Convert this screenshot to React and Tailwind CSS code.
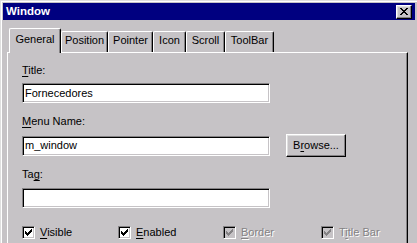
import React from 'react';

const CHECK = [
  [6, 0], [5, 1], [6, 1], [0, 2], [4, 2], [5, 2], [6, 2],
  [0, 3], [1, 3], [3, 3], [4, 3], [5, 3],
  [0, 4], [1, 4], [2, 4], [3, 4], [4, 4],
  [1, 5], [2, 5], [3, 5], [2, 6],
];

const CROSS = [
  [0, 0], [1, 0], [6, 0], [7, 0],
  [1, 1], [2, 1], [5, 1], [6, 1],
  [2, 2], [3, 2], [4, 2], [5, 2],
  [3, 3], [4, 3],
  [2, 4], [3, 4], [4, 4], [5, 4],
  [1, 5], [2, 5], [5, 5], [6, 5],
  [0, 6], [1, 6], [6, 6], [7, 6],
];

function Pixels({ cells, w, h, color }) {
  return (
    <svg width={w} height={h} viewBox={`0 0 ${w} ${h}`} shapeRendering="crispEdges">
      {cells.map(([x, y]) => (
        <rect key={`${x}-${y}`} x={x} y={y} width="1" height="1" fill={color} />
      ))}
    </svg>
  );
}

function Field({ value, className = 'w-[248px]' }) {
  return (
    <div className={`${className} h-[20px] bg-white border border-t-[#848284] border-l-[#848284] border-b-white border-r-white shadow-[inset_1px_1px_#000,inset_-1px_-1px_#c6c3c6] flex items-center pl-[2px] leading-[13px]`}>
      {value}
    </div>
  );
}

function Check({ label, accel, rest, disabled }) {
  return (
    <div className="flex items-center gap-[5px]">
      <div className={`w-[13px] h-[13px] border border-t-[#848284] border-l-[#848284] border-b-white border-r-white shadow-[inset_1px_1px_#000,inset_-1px_-1px_#c6c3c6] flex items-center justify-center ${disabled ? 'bg-[#c6c3c6]' : 'bg-white'}`}>
        <Pixels cells={CHECK} w={7} h={7} color={disabled ? '#848284' : '#000'} />
      </div>
      <span className={`leading-[13px] ${disabled ? 'text-[#848284] [text-shadow:1px_1px_0_#fff]' : ''}`}>
        {label}<span className="underline underline-offset-[2px]">{accel}</span>{rest}
      </span>
    </div>
  );
}

const tabs = [
  { name: 'Position', w: 'w-[47px]' },
  { name: 'Pointer', w: 'w-[45px]' },
  { name: 'Icon', w: 'w-[33px]' },
  { name: 'Scroll', w: 'w-[39px]' },
  { name: 'ToolBar', w: 'w-[49px]' },
];

export default function App() {
  return (
    <div className="w-[417px] h-[243px] overflow-hidden bg-[#c6c3c6] border-l border-t border-[#dfdfdf] font-['Liberation_Sans',Arial,sans-serif] text-[11px] text-black">
      <div className="h-full border-l border-t border-white pl-px pt-px">
        {/* title bar */}
        <div className="h-[17px] w-[412px] bg-[#000080] flex items-center justify-between pl-[3px] pr-[3px]">
          <span className="text-white font-bold text-[11.5px] leading-[13px]">Window</span>
          <div className="w-[16px] h-[14px] bg-[#c6c3c6] border border-t-white border-l-white border-b-black border-r-black shadow-[inset_-1px_-1px_#848284,inset_1px_1px_#dfdfdf] flex items-center justify-center pr-px pb-px">
            <Pixels cells={CROSS} w={8} h={7} color="#000" />
          </div>
        </div>

        <div className="ml-[4px] mt-[8px] w-[401px]">
          {/* tabs */}
          <div className="flex items-end h-[24px] pl-[2px]">
            <div className="relative z-10 w-[52px] h-[25px] -mb-px bg-[#c6c3c6] border-l border-t border-white border-r border-r-black rounded-t-[2px] shadow-[inset_-1px_0_#848284] text-center pt-[4px] leading-[13px]">
              General
            </div>
            {tabs.map(t => (
              <div key={t.name} className={`${t.w} h-[21px] border-l border-t border-white border-r border-r-black rounded-t-[2px] shadow-[inset_-1px_0_#848284] text-center pt-[2px] leading-[13px]`}>
                {t.name}
              </div>
            ))}
          </div>

          {/* panel */}
          <div className="h-[200px] border-l border-t border-white border-r border-r-black shadow-[inset_-1px_0_#848284] pl-[14px] pt-[11px]">
            <div className="leading-[13px]"><span className="underline underline-offset-[2px]">T</span>itle:</div>
            <div className="mt-[6px]"><Field value="Fornecedores" /></div>

            <div className="mt-[12px] leading-[13px]"><span className="underline underline-offset-[2px]">M</span>enu Name:</div>
            <div className="mt-[6px] flex items-center gap-[16px]">
              <Field value="m_window" />
              <div className="w-[60px] h-[23px] border border-t-white border-l-white border-b-black border-r-black shadow-[inset_-1px_-1px_#848284,inset_1px_1px_#dfdfdf] flex items-center justify-center leading-[13px]">
                B<span className="underline underline-offset-[2px]">r</span>owse...
              </div>
            </div>

            <div className="mt-[11px] leading-[13px]">Ta<span className="underline underline-offset-[2px]">g</span>:</div>
            <div className="mt-[7px]"><Field value="" /></div>

            <div className="mt-[18px] grid grid-cols-[96px_105px_98px_auto]">
              <Check accel="V" rest="isible" />
              <Check accel="E" rest="nabled" />
              <Check accel="B" rest="order" disabled />
              <Check label="T" accel="i" rest="tle Bar" disabled />
            </div>
          </div>
        </div>
      </div>
    </div>
  );
}
